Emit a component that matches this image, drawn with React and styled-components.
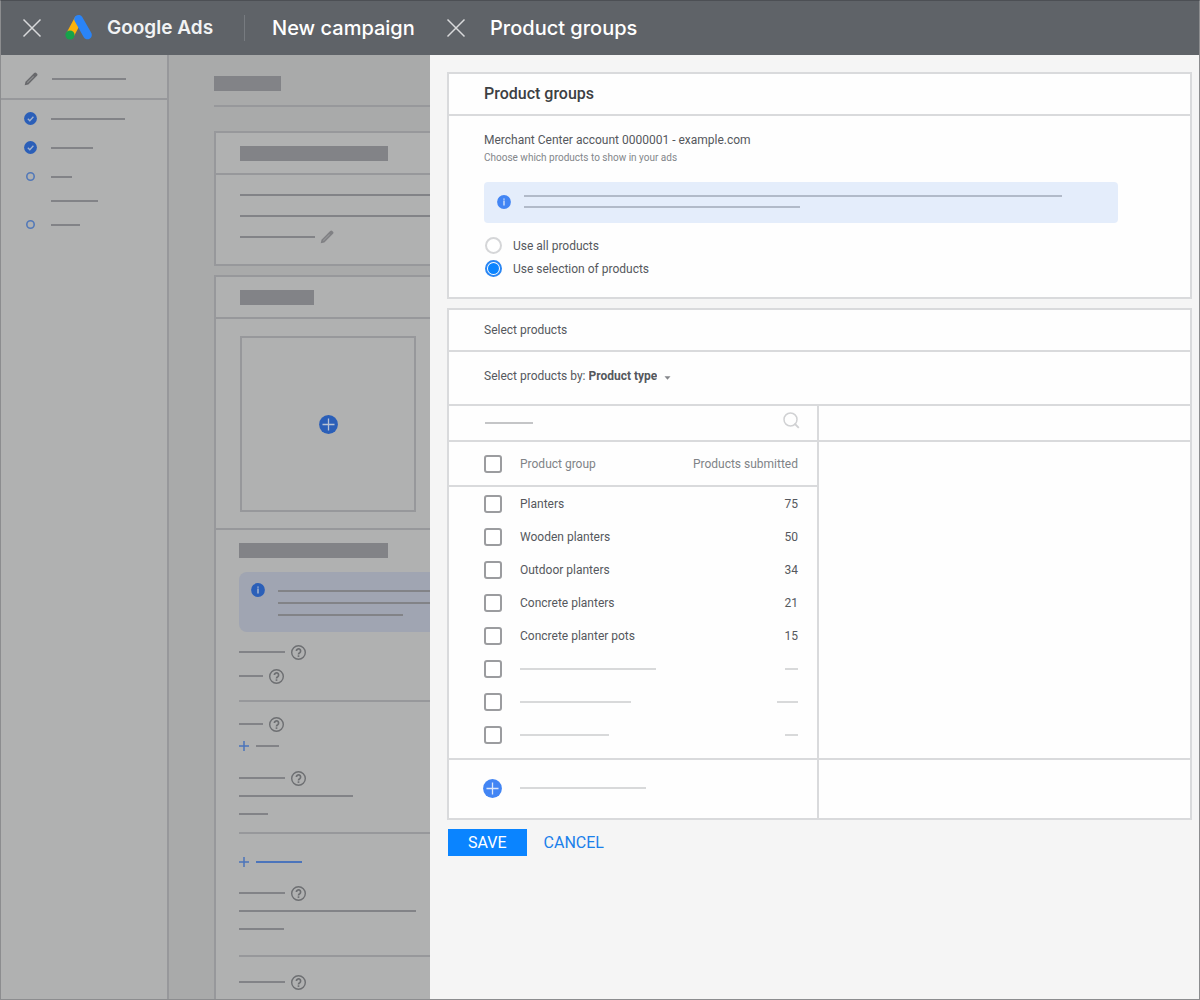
import React, { useState } from "react";
import styled, { createGlobalStyle } from "styled-components";

const GlobalStyle = createGlobalStyle`
  *, *::before, *::after { box-sizing: border-box; }
  body {
    margin: 0;
    font-family: Roboto, "Liberation Sans", sans-serif;
    font-size: 12px;
    color: #55585d;
  }
  button, select, input { font: inherit; color: inherit; }
`;

const line = "#d9dadc";
const dimLine = "#97989b";

const Page = styled.div`
  display: flex;
  flex-direction: column;
  min-height: 100vh;
  border: 1px solid #8c8d8f;
  border-top-color: #4c4f54;
`;

const TopBar = styled.header`
  display: flex;
  height: 54px;
  background: #5f6368;
  color: #fff;
`;

const BarSection = styled.div`
  display: flex;
  align-items: center;
  flex: ${(p) => (p.$grow ? "1" : "0 0 429px")};
  padding-left: ${(p) => (p.$grow ? 16 : 21)}px;
  white-space: nowrap;
`;

const IconButton = styled.button`
  display: flex;
  padding: 0;
  border: 0;
  background: none;
  cursor: pointer;
`;

const Brand = styled.div`
  display: flex;
  align-items: center;
  gap: 14px;
  margin-left: 23px;
  padding-right: 31px;
  font: 600 19px/26px Inter, Roboto, sans-serif;
  color: #f1f3f4;
`;

const BarTitle = styled.h1`
  margin: 0;
  padding-left: ${(p) => (p.$divided ? 27 : 24)}px;
  border-left: ${(p) => (p.$divided ? "1px solid #777b80" : "0")};
  font: 500 20px/26px Inter, Roboto, sans-serif;
`;

const Body = styled.div`
  display: flex;
  flex: 1;
`;

const Backdrop = styled.div`
  display: flex;
  flex: 0 0 429px;
  overflow: hidden;
  background: #a9aaaa;
`;

const Sidebar = styled.nav`
  flex: 0 0 168px;
  border-right: 2px solid ${dimLine};
  background: #b0b1b1;
`;

const SideHead = styled.div`
  display: flex;
  align-items: center;
  gap: 14px;
  height: 45px;
  padding: 4px 0 0 23px;
  border-bottom: 2px solid ${dimLine};
`;

const Steps = styled.ol`
  margin: 0;
  padding: 4px 0 0 23px;
  list-style: none;
`;

const Step = styled.li`
  display: flex;
  align-items: center;
  gap: 14px;
  height: ${(p) => (p.$sub ? 19 : 29)}px;
`;

const IconSlot = styled.span`
  display: flex;
  justify-content: center;
  flex: 0 0 13px;
`;

const Stroke = styled.span`
  display: block;
  flex: none;
  width: ${(p) => (p.$w ? `${p.$w}px` : "100%")};
  height: 2px;
  background: ${(p) => p.$c || "#828387"};
`;

const Block = styled.div`
  width: ${(p) => p.$w}px;
  height: 15px;
  background: #828387;
`;

const DimMain = styled.div`
  flex: 1;
  min-width: 0;
  padding: 21px 0 0 45px;
`;

const Rule = styled.hr`
  height: 2px;
  margin: ${(p) => p.$m || "0"};
  border: 0;
  background: ${dimLine};
`;

const DimCard = styled.section`
  margin-top: ${(p) => p.$top}px;
  border: 2px solid ${dimLine};
  border-right: 0;
  border-bottom-width: ${(p) => (p.$open ? 0 : 2)}px;
  background: #b0b1b1;
`;

const DimHead = styled.div`
  display: flex;
  align-items: center;
  height: 42px;
  padding-left: 24px;
  border-bottom: 2px solid ${dimLine};
`;

const DimCopy = styled.div`
  display: flex;
  flex-direction: column;
  gap: 19px;
  padding: 19px 0 26px 24px;
`;

const EditLine = styled.div`
  display: flex;
  align-items: center;
  gap: 5px;
  height: 2px;
`;

const Uploads = styled.div`
  padding: 17px 0 16px 24px;
  border-bottom: 2px solid ${dimLine};
`;

const AddTile = styled.button`
  display: flex;
  align-items: center;
  justify-content: center;
  width: 176px;
  height: 176px;
  padding: 0;
  border: 2px solid ${dimLine};
  background: none;
`;

const DimForm = styled.div`
  padding: 13px 0 9px 23px;
`;

const DimNotice = styled.div`
  display: flex;
  gap: 13px;
  height: 60px;
  margin-top: 14px;
  padding: 11px 0 0 12px;
  border-radius: 8px 0 0 8px;
  background: #a0a5b2;
`;

const NoticeLines = styled.div`
  display: flex;
  flex: 1;
  flex-direction: column;
  gap: ${(p) => p.$gap}px;
  padding: ${(p) => p.$pad || "7px 0 0"};
`;

const Group = styled.div`
  display: flex;
  flex-direction: column;
  gap: ${(p) => p.$gap}px;
  margin-top: ${(p) => p.$top || 0}px;
`;

const FieldRow = styled.div`
  display: flex;
  align-items: center;
  gap: ${(p) => p.$gap || 6}px;
  height: 16px;
`;

const Drawer = styled.main`
  flex: 1;
  min-width: 0;
  padding: 17px 7px 24px 17px;
  background: #f5f5f5;
`;

const Card = styled.section`
  margin-bottom: 9px;
  border: 2px solid ${line};
  background: #fefefe;
`;

const CardHead = styled.h2`
  margin: 0;
  padding-left: 35px;
  border-bottom: 2px solid ${line};
  font-size: ${(p) => (p.$small ? 12 : 16)}px;
  font-weight: ${(p) => (p.$small ? 400 : 500)};
  line-height: 40px;
  color: ${(p) => (p.$small ? "#55585d" : "#3c4043")};
`;

const CardBody = styled.div`
  padding: 15px 72px 17px 35px;
`;

const Text = styled.p`
  margin: 0;
  font-size: ${(p) => (p.$muted ? 10 : 12)}px;
  line-height: 18px;
  color: ${(p) => (p.$muted ? "#83868a" : "#55585d")};
`;

const Notice = styled.div`
  display: flex;
  align-items: center;
  gap: 13px;
  height: 41px;
  margin: 15px 0 11px;
  padding: 0 0 2px 13px;
  border-radius: 4px;
  background: #e4edfb;
`;

const Choice = styled.label`
  display: flex;
  align-items: center;
  gap: 11px;
  width: fit-content;
  height: 23px;
  padding-left: 1px;
`;

const Radio = styled.input`
  appearance: none;
  display: grid;
  place-items: center;
  width: 17px;
  height: 17px;
  margin: 0;
  border: 2px solid #d5d6d8;
  border-radius: 50%;
  background: #fff;
  &:checked { border-color: #2a86f3; }
  &:checked::before {
    content: "";
    width: 11px;
    height: 11px;
    border-radius: 50%;
    background: #0a84ff;
  }
`;

const SelectBy = styled.div`
  display: flex;
  align-items: center;
  height: 54px;
  padding: 0 0 4px 35px;
  border-bottom: 2px solid ${line};
`;

const TypeSelect = styled.select`
  appearance: none;
  field-sizing: content;
  margin: 0 7px 0 3px;
  padding: 0;
  border: 0;
  background: none;
  font-weight: 700;
`;

const Columns = styled.div`
  display: grid;
  grid-template-columns: 370px 1fr;
`;

const ListCell = styled.div`
  border-right: 2px solid ${line};
`;

const SearchBar = styled.div`
  display: flex;
  align-items: center;
  justify-content: space-between;
  height: 36px;
  padding: 0 17px 0 36px;
  border-bottom: 2px solid ${line};
`;

const SearchButton = styled(IconButton)`
  padding-bottom: 5px;
`;

const Chosen = styled.div`
  display: flex;
  flex-direction: column;
`;

const ChosenHead = styled.div`
  height: 36px;
  border-bottom: 2px solid ${line};
`;

const ChosenBody = styled.div`
  flex: 1;
`;

const ChosenFoot = styled.div`
  height: 60px;
  border-top: 2px solid ${line};
`;

const Table = styled.table`
  width: 100%;
  margin-bottom: 7px;
  border-spacing: 0;
`;

const cellPad = `
  padding: 0;
  text-align: left;
  &:first-child { width: 71px; padding-left: 35px; }
  &:last-child { padding-right: 19px; text-align: right; }
`;

const Th = styled.th`
  ${cellPad}
  height: 45px;
  border-bottom: 2px solid ${line};
  font-weight: 400;
  color: #808387;
`;

const Td = styled.td`
  ${cellPad}
  height: 33px;
`;

const CellStroke = styled(Stroke)`
  margin-left: ${(p) => (p.$end ? "auto" : "0")};
`;

const Check = styled.input`
  appearance: none;
  display: block;
  width: 18px;
  height: 18px;
  margin: 0;
  border: 2px solid #9b9c9f;
  border-radius: 3px;
  background: #fff;
  &:checked { background: #4285f4; }
`;

const AddRow = styled.div`
  display: flex;
  align-items: center;
  gap: 18px;
  height: 60px;
  padding: 0 0 2px 34px;
  border-top: 2px solid ${line};
`;

const Actions = styled.div`
  display: flex;
  gap: 17px;
  padding-left: 1px;
`;

const Action = styled.button`
  height: 27px;
  padding: 0 ${(p) => (p.$primary ? 20 : 0)}px;
  border: 0;
  background: ${(p) => (p.$primary ? "#0a84ff" : "none")};
  color: ${(p) => (p.$primary ? "#fff" : "#1a80ea")};
  font-size: 16px;
  cursor: pointer;
`;

const CloseIcon = () => (
  <svg width="20" height="20" viewBox="0 0 20 20" fill="none" stroke="#d9dadb" strokeWidth="1.500" aria-hidden="true">
    <path d="M1.500 1.500L18.500 18.500M18.500 1.500L1.500 18.500" />
  </svg>
);

const AdsLogo = () => (
  <svg width="28" height="28" viewBox="0 0 28 28" aria-hidden="true">
    <path d="M13 6L5.500 20" stroke="#fbb20b" strokeWidth="8" strokeLinecap="round" />
    <path d="M13.500 5.200L22.500 21" stroke="#2a84f8" strokeWidth="8.600" strokeLinecap="round" />
    <circle cx="5" cy="21" r="4.600" fill="#17a24b" />
  </svg>
);

const Pencil = ({ color, core }) => (
  <svg width="14" height="14" viewBox="0 0 14 14" aria-hidden="true">
    <path d="M.7 13.300l.8-3.600L10.200 1a1.500 1.500 0 0 1 2.100 0l.7.7a1.500 1.500 0 0 1 0 2.100L4.300 12.500z" fill={color} />
    <path d="M3.300 10.700L9.600 4.400" stroke={core} strokeWidth="1.200" />
  </svg>
);

const StepDone = () => (
  <svg width="13" height="13" viewBox="0 0 13 13" aria-hidden="true">
    <circle cx="6.500" cy="6.500" r="6.400" fill="#2b5fb8" />
    <path d="M3.800 6.800l2 1.900 3.600-3.900" fill="none" stroke="#a3b3cf" strokeWidth="1.300" />
  </svg>
);

const StepOpen = () => (
  <svg width="9" height="9" viewBox="0 0 9 9" aria-hidden="true">
    <circle cx="4.500" cy="4.500" r="3.700" fill="none" stroke="#5379b8" strokeWidth="1.600" />
  </svg>
);

const PlusDisc = ({ fill, cross }) => (
  <svg width="19" height="19" viewBox="0 0 19 19" aria-hidden="true">
    <circle cx="9.500" cy="9.500" r="9.400" fill={fill} />
    <path d="M9.500 3.500v12M3.500 9.500h12" stroke={cross} strokeWidth="1.300" />
  </svg>
);

const Plus = () => (
  <svg width="10" height="10" viewBox="0 0 10 10" aria-hidden="true">
    <path d="M5 0v10M0 5h10" stroke="#4b74bb" strokeWidth="1.500" />
  </svg>
);

const Info = ({ fill, mark }) => (
  <svg width="14" height="14" viewBox="0 0 14 14" aria-hidden="true">
    <circle cx="7" cy="7" r="6.900" fill={fill} />
    <path d="M7 3.500v1.300M7 5.600v4.900" stroke={mark} strokeWidth="1.300" />
  </svg>
);

const Help = () => (
  <svg width="15" height="15" viewBox="0 0 15 15" fill="none" stroke="#6d6f72" aria-hidden="true">
    <circle cx="7.500" cy="7.500" r="6.800" strokeWidth="1.400" />
    <path d="M5.400 6a2.100 2.100 0 1 1 3.300 1.700c-.8.5-1.200.9-1.200 1.700" strokeWidth="1.700" />
    <path d="M7.500 10.300v1.600" strokeWidth="1.700" />
  </svg>
);

const SearchIcon = () => (
  <svg width="17" height="17" viewBox="0 0 17 17" fill="none" stroke="#d0d1d3" strokeWidth="1.500" aria-hidden="true">
    <circle cx="7.500" cy="7.500" r="6.500" />
    <path d="M11.500 11.500l4.300 4.300" strokeWidth="1.800" />
  </svg>
);

const Caret = () => (
  <svg width="7" height="7" viewBox="0 0 7 7" aria-hidden="true">
    <path d="M.5 3.200h6L3.500 6.800z" fill="#85878b" />
  </svg>
);

const steps = [
  { icon: "done", w: 74 },
  { icon: "done", w: 42 },
  { icon: "open", w: 21 },
  { sub: true, w: 47 },
  { icon: "open", w: 29 },
];

const groups = [
  { name: "Planters", count: 75 },
  { name: "Wooden planters", count: 50 },
  { name: "Outdoor planters", count: 34 },
  { name: "Concrete planters", count: 21 },
  { name: "Concrete planter pots", count: 15 },
  { nameW: 136, countW: 13 },
  { nameW: 111, countW: 21 },
  { nameW: 89, countW: 13 },
];

const HelpField = ({ w }) => (
  <FieldRow>
    <Stroke $w={w} />
    <Help />
  </FieldRow>
);

const AddField = ({ w, color }) => (
  <FieldRow $gap={7}>
    <Plus />
    <Stroke $w={w} $c={color} />
  </FieldRow>
);

const LineField = ({ w }) => (
  <FieldRow>
    <Stroke $w={w} />
  </FieldRow>
);

export default function App() {
  const [mode, setMode] = useState("selection");

  return (
    <Page>
      <GlobalStyle />
      <TopBar>
        <BarSection>
          <IconButton aria-label="Close campaign"><CloseIcon /></IconButton>
          <Brand><AdsLogo />Google Ads</Brand>
          <BarTitle $divided>New campaign</BarTitle>
        </BarSection>
        <BarSection $grow>
          <IconButton aria-label="Close product groups"><CloseIcon /></IconButton>
          <BarTitle>Product groups</BarTitle>
        </BarSection>
      </TopBar>

      <Body>
        <Backdrop>
          <Sidebar>
            <SideHead>
              <IconSlot><Pencil color="#68696c" core="#8e8f91" /></IconSlot>
              <Stroke $w={74} />
            </SideHead>
            <Steps>
              {steps.map((s, i) => (
                <Step key={i} $sub={s.sub}>
                  <IconSlot>
                    {s.icon === "done" && <StepDone />}
                    {s.icon === "open" && <StepOpen />}
                  </IconSlot>
                  <Stroke $w={s.w} />
                </Step>
              ))}
            </Steps>
          </Sidebar>

          <DimMain>
            <Block $w={67} />
            <Rule $m="14px 0 0" />
            <DimCard $top={24}>
              <DimHead><Block $w={148} /></DimHead>
              <DimCopy>
                <Stroke />
                <Stroke />
                <EditLine><Stroke $w={75} /><Pencil color="#808184" core="#949597" /></EditLine>
              </DimCopy>
            </DimCard>
            <DimCard $top={9} $open>
              <DimHead><Block $w={74} /></DimHead>
              <Uploads>
                <AddTile aria-label="Add image">
                  <PlusDisc fill="#2b5fb8" cross="#b9c3d4" />
                </AddTile>
              </Uploads>
              <DimForm>
                <Block $w={149} />
                <DimNotice>
                  <Info fill="#2b5fb8" mark="#b9c3d4" />
                  <NoticeLines $gap={10}>
                    <Stroke />
                    <Stroke />
                    <Stroke $w={125} />
                  </NoticeLines>
                </DimNotice>
                <Group $gap={8} $top={12}>
                  <HelpField w={46} />
                  <HelpField w={24} />
                </Group>
                <Rule $m="16px 0 14px" />
                <Group $gap={6}>
                  <HelpField w={24} />
                  <AddField w={23} />
                </Group>
                <Group $gap={2} $top={16}>
                  <HelpField w={46} />
                  <LineField w={114} />
                  <LineField w={29} />
                </Group>
                <Rule $m="10px 0 20px" />
                <AddField w={46} color="#4b74bb" />
                <Group $gap={2} $top={15}>
                  <HelpField w={46} />
                  <LineField w={177} />
                  <LineField w={45} />
                </Group>
                <Rule $m="18px 0 17px" />
                <HelpField w={46} />
              </DimForm>
            </DimCard>
          </DimMain>
        </Backdrop>

        <Drawer>
          <Card>
            <CardHead>Product groups</CardHead>
            <CardBody>
              <Text>Merchant Center account 0000001 - example.com</Text>
              <Text $muted>Choose which products to show in your ads</Text>
              <Notice>
                <Info fill="#4285f4" mark="#dbe7fb" />
                <NoticeLines $gap={9} $pad="0 56px 0 0">
                  <Stroke $c="#b1bac9" />
                  <Stroke $w={276} $c="#b1bac9" />
                </NoticeLines>
              </Notice>
              <Choice>
                <Radio type="radio" name="mode" checked={mode === "all"} onChange={() => setMode("all")} />
                Use all products
              </Choice>
              <Choice>
                <Radio type="radio" name="mode" checked={mode === "selection"} onChange={() => setMode("selection")} />
                Use selection of products
              </Choice>
            </CardBody>
          </Card>

          <Card>
            <CardHead $small>Select products</CardHead>
            <SelectBy>
              <label htmlFor="select-by">Select products by:</label>
              <TypeSelect id="select-by">
                <option>Product type</option>
              </TypeSelect>
              <Caret />
            </SelectBy>
            <Columns>
              <ListCell>
                <SearchBar>
                  <Stroke $w={48} $c="#c4c5c7" />
                  <SearchButton aria-label="Search"><SearchIcon /></SearchButton>
                </SearchBar>
                <Table>
                  <thead>
                    <tr>
                      <Th><Check type="checkbox" aria-label="Select all" /></Th>
                      <Th>Product group</Th>
                      <Th>Products submitted</Th>
                    </tr>
                  </thead>
                  <tbody>
                    {groups.map((g, i) => (
                      <tr key={i}>
                        <Td><Check type="checkbox" id={`group-${i}`} aria-label={g.name ? undefined : "Select group"} /></Td>
                        <Td>{g.name ? <label htmlFor={`group-${i}`}>{g.name}</label> : <CellStroke $w={g.nameW} $c="#d8d9da" />}</Td>
                        <Td>{g.count || <CellStroke $end $w={g.countW} $c="#d8d9da" />}</Td>
                      </tr>
                    ))}
                  </tbody>
                </Table>
                <AddRow>
                  <IconButton aria-label="Add group"><PlusDisc fill="#4285f4" cross="#dbe7fb" /></IconButton>
                  <Stroke $w={126} $c="#d8d9da" />
                </AddRow>
              </ListCell>
              <Chosen>
                <ChosenHead />
                <ChosenBody />
                <ChosenFoot />
              </Chosen>
            </Columns>
          </Card>

          <Actions>
            <Action $primary>SAVE</Action>
            <Action>CANCEL</Action>
          </Actions>
        </Drawer>
      </Body>
    </Page>
  );
}
